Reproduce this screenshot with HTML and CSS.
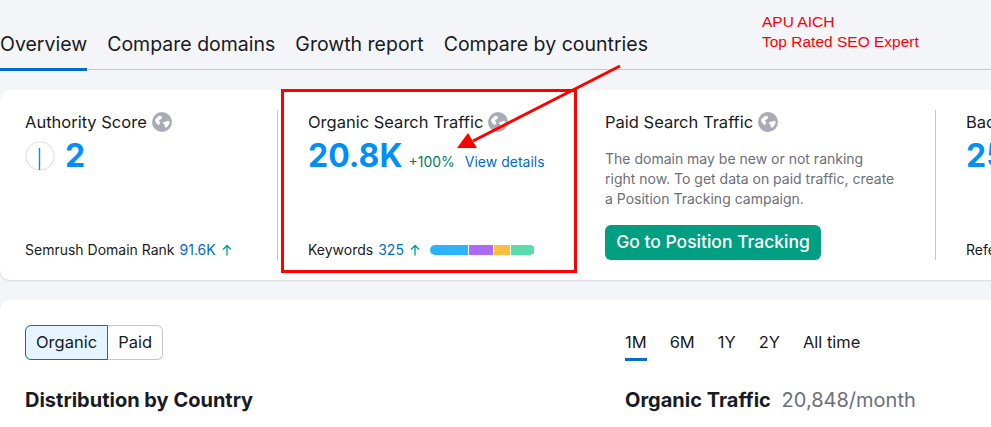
FILE: index.html
```html
<!DOCTYPE html>
<html lang="en">
<head>
  <meta charset="UTF-8" />
  <title>Domain Overview</title>
  <link rel="stylesheet" href="styles.css">
</head>
<body>

  <!-- tabs -->
  <nav class="tabs">
    <a class="tab active">Overview</a>
    <a class="tab">Compare domains</a>
    <a class="tab">Growth report</a>
    <a class="tab">Compare by countries</a>
  </nav>

  <!-- metrics -->
  <section class="card metrics">
    <div class="metric authority">
      <div>
        <div class="metric-title">Authority Score
          <svg class="globe" viewBox="0 0 20 20"><circle cx="10" cy="10" r="10" fill="#a9abb6"/><path d="M3 7.5 7 3.8l3.2.6-.7 2.6-2.6 1.3 1.4 2.6-1.6 2.3-3-2.7zM10.5 10.6l5.8-1.8 1.7 1.5-2.3 4.2-2.4 1.5-1-3.2z" fill="#fff"/></svg>
        </div>
        <div class="metric-value">
          <svg class="gauge" viewBox="0 0 30 30"><circle cx="15" cy="15" r="14" fill="none" stroke="#e0e1e9" stroke-width="1.2"/><path d="M14.5 7v22" stroke="#008ff8" stroke-width="1.4"/></svg>
          <span class="big">2</span>
        </div>
      </div>
      <div class="metric-foot">Semrush Domain Rank <span class="num">91.6K</span>
        <svg class="up" viewBox="0 0 10 12"><path d="M5 11.5V1.5M1 5.5l4-4 4 4" fill="none" stroke="#009f81" stroke-width="1.3"/></svg>
      </div>
    </div>

    <div class="metric organic">
      <div>
        <div class="metric-title">Organic Search Traffic
          <svg class="globe" viewBox="0 0 20 20"><circle cx="10" cy="10" r="10" fill="#a9abb6"/><path d="M3 7.5 7 3.8l3.2.6-.7 2.6-2.6 1.3 1.4 2.6-1.6 2.3-3-2.7zM10.5 10.6l5.8-1.8 1.7 1.5-2.3 4.2-2.4 1.5-1-3.2z" fill="#fff"/></svg>
        </div>
        <div class="metric-value">
          <span class="big">20.8K</span>
          <span class="delta">+100%</span>
          <a class="details">View details</a>
        </div>
      </div>
      <div class="metric-foot">Keywords <span class="num">325</span>
        <svg class="up" viewBox="0 0 10 12"><path d="M5 11.5V1.5M1 5.5l4-4 4 4" fill="none" stroke="#009f81" stroke-width="1.3"/></svg>
        <div class="kw-bar">
          <span class="seg seg-blue"></span>
          <span class="seg seg-purple"></span>
          <span class="seg seg-yellow"></span>
          <span class="seg seg-green"></span>
        </div>
      </div>
    </div>

    <div class="metric paid">
      <div>
        <div class="metric-title">Paid Search Traffic
          <svg class="globe" viewBox="0 0 20 20"><circle cx="10" cy="10" r="10" fill="#a9abb6"/><path d="M3 7.5 7 3.8l3.2.6-.7 2.6-2.6 1.3 1.4 2.6-1.6 2.3-3-2.7zM10.5 10.6l5.8-1.8 1.7 1.5-2.3 4.2-2.4 1.5-1-3.2z" fill="#fff"/></svg>
        </div>
        <p class="paid-text">The domain may be new or not ranking right now. To get data on paid traffic, create a Position Tracking campaign.</p>
      </div>
      <a class="track-btn">Go to Position Tracking</a>
    </div>

    <div class="metric backlinks">
      <div>
        <div class="metric-title">Backlinks</div>
        <div class="metric-value"><span class="big">25</span></div>
      </div>
      <div class="metric-foot">Referring Domains</div>
    </div>
  </section>

  <!-- lower card -->
  <section class="card lower">
    <div class="lower-left">
      <div class="toggle">
        <span class="toggle-item on">Organic</span><span class="toggle-item">Paid</span>
      </div>
      <h2 class="heading">Distribution by Country</h2>
    </div>
    <div class="lower-right">
      <div class="ranges">
        <span class="range on">1M</span>
        <span class="range">6M</span>
        <span class="range">1Y</span>
        <span class="range">2Y</span>
        <span class="range">All time</span>
      </div>
      <h2 class="heading">Organic Traffic <span class="heading-sub">20,848/month</span></h2>
    </div>
  </section>

  <!-- annotation drawn over the screenshot -->
  <div class="note">APU AICH<br>Top Rated SEO Expert</div>
  <div class="red-box"></div>
  <svg class="arrow" viewBox="0 0 991 427">
    <path d="M620 66 473 141" stroke="#f00" stroke-width="3" fill="none"/>
    <path d="M468 133 457 148H477z" fill="#f00"/>
  </svg>

</body>
</html>
```

FILE: styles.css
```css
:root {
  --bg: #f4f5f9;
  --text: #191b23;
  --grey: #6c6e79;
  --blue: #008ff8;
  --link: #006dca;
  --line: #c4c7cf;
  --green: #009f81;
}

body {
  font-family: "Inter", "Liberation Sans", sans-serif;
  background-color: var(--bg);
  color: var(--text);
  margin: 0;
  height: 427px;
  overflow: hidden;
  position: relative;
}

.tabs {
  display: flex;
  gap: 20px;
  height: 69px;
  padding-top: 31px;
  box-sizing: border-box;
  border-bottom: 1px solid var(--line);
  margin-bottom: 20px;
  height: 70px;
}

.tab {
  font-size: 19.5px;
  line-height: 26px;
  height: 39px;
}

.tab.active {
  border-bottom: 3px solid var(--link);
  height: 37px;
}

.card {
  background: #fff;
  border-radius: 10px 0 0 10px;
  box-shadow: 0 1px 2px rgba(0,0,0,0.12);
}

.metrics {
  display: flex;
  height: 190px;
  padding: 20px 0;
  box-sizing: border-box;
  margin-bottom: 20px;
  width: 1100px;
}

.metric {
  display: flex;
  flex-direction: column;
  justify-content: space-between;
  box-sizing: border-box;
  flex: none;
}

.authority {
  width: 278px;
  padding-left: 25px;
  border-right: 1px solid var(--line);
}

.organic {
  width: 297px;
  padding-left: 30px;
}

.paid {
  width: 361px;
  padding-left: 30px;
  padding-right: 40px;
  border-right: 1px solid var(--line);
}

.backlinks {
  padding-left: 30px;
  width: 200px;
}

.metric-title {
  font-size: 16.5px;
  line-height: 24px;
  display: flex;
  align-items: center;
  gap: 5px;
}

.globe {
  width: 20px;
  height: 20px;
}

.metric-value {
  display: flex;
  align-items: baseline;
  margin-top: 2px;
}

.gauge {
  width: 30px;
  height: 30px;
  align-self: center;
  margin-right: 10px;
}

.big {
  font-size: 32px;
  line-height: 40px;
  font-weight: 700;
  color: var(--blue);
}

.delta {
  font-size: 14px;
  color: #007c65;
  margin-left: 6px;
}

.details {
  font-size: 14px;
  color: var(--link);
  margin-left: 10px;
}

.metric-foot {
  font-size: 14px;
  line-height: 20px;
  display: flex;
  align-items: center;
  gap: 5px;
}

.num {
  color: var(--link);
}

.up {
  width: 10px;
  height: 12px;
  margin-left: 1px;
}

.kw-bar {
  display: flex;
  gap: 1px;
  height: 10px;
  width: 105px;
  margin-left: 5px;
  border-radius: 5px;
  overflow: hidden;
}

.seg {
  display: block;
}

.seg-blue { width: 38px; background: #2bb3ff; }
.seg-purple { width: 24px; background: #ab6cfe; }
.seg-yellow { width: 16px; background: #ffbe3a; }
.seg-green { width: 23px; background: #59ddaa; }

.paid-text {
  font-size: 14px;
  line-height: 20px;
  color: var(--grey);
  margin: 15px 0 0;
}

.track-btn {
  display: block;
  width: 216px;
  height: 35px;
  line-height: 34px;
  text-align: center;
  background: var(--green);
  color: #fff;
  font-size: 17.5px;
  font-weight: 500;
  border-radius: 6px;
}

.lower {
  display: flex;
  height: 200px;
  width: 1100px;
}

.lower-left {
  width: 625px;
  padding: 25px 0 0 25px;
  box-sizing: border-box;
}

.toggle {
  display: inline-flex;
  height: 35px;
}

.toggle-item {
  font-size: 16.5px;
  line-height: 33px;
  padding: 0 10px;
  border: 1px solid #c4c7cf;
  border-left: none;
  border-radius: 0 6px 6px 0;
}

.toggle-item.on {
  background: #e6f4ff;
  border: 1px solid var(--link);
  border-radius: 6px 0 0 6px;
}

.heading {
  font-size: 20px;
  line-height: 26px;
  font-weight: 700;
  margin: 27px 0 0;
}

.lower-right {
  padding-top: 25px;
}

.ranges {
  display: flex;
  gap: 23px;
  height: 36px;
}

.range {
  font-size: 16.5px;
  line-height: 34px;
}

.range.on {
  border-bottom: 3px solid var(--link);
  height: 33px;
}

.lower-right .heading {
  margin-top: 26px;
}

.heading-sub {
  font-weight: 400;
  color: var(--grey);
  margin-left: 6px;
}

.note {
  position: absolute;
  left: 762px;
  top: 12px;
  font-family: "Liberation Sans", sans-serif;
  font-size: 15.5px;
  line-height: 20px;
  color: #f00;
}

.red-box {
  position: absolute;
  left: 281px;
  top: 89px;
  width: 296px;
  height: 184px;
  box-sizing: border-box;
  border: 3px solid #f00;
}

.arrow {
  position: absolute;
  left: 0;
  top: 0;
  width: 991px;
  height: 427px;
}
```
